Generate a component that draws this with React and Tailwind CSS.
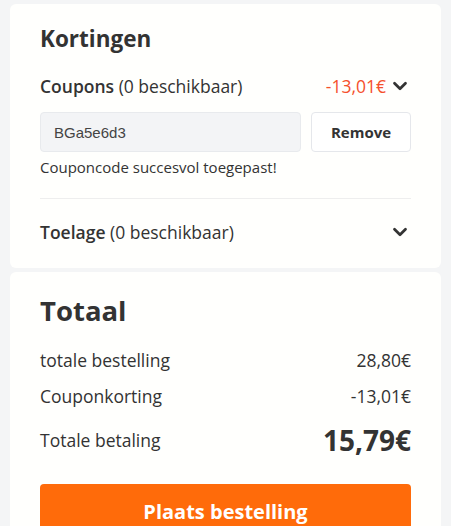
import { ChevronDown } from "lucide-react";

function Row({ label, value }) {
  return (
    <div className="flex items-center justify-between h-[24px]">
      <span className="text-[17.5px] text-[#333]">{label}</span>
      <span className="text-[17.5px] text-[#333]">{value}</span>
    </div>
  );
}

export default function App() {
  return (
    <div className="min-h-screen bg-[#f4f5f6] px-[10px] pt-[4px] flex flex-col gap-[4px] font-['Open_Sans',sans-serif] text-[#333]">
      {/* Kortingen */}
      <div className="bg-[#fffffd] rounded-md px-[30px] pt-[19px] pb-[22px]">
        <h2 className="text-[22.5px] font-bold leading-[32px]">Kortingen</h2>

        <div className="mt-[17px] flex items-center justify-between h-[28px]">
          <div className="text-[17.5px]">
            <span className="font-semibold">Coupons</span> (0 beschikbaar)
          </div>
          <div className="flex items-center gap-[3px]">
            <span className="text-[17.5px] text-[#f5502c]">-13,01€</span>
            <ChevronDown size={22} strokeWidth={3} className="text-[#333]" />
          </div>
        </div>

        <div className="mt-[12px] flex gap-[10px]">
          <input
            readOnly
            value="BGa5e6d3"
            className="flex-1 min-w-0 h-[40px] bg-[#f3f4f6] border border-[#e8eaed] rounded-[4px] px-[13px] font-['Liberation_Sans',sans-serif] text-[15px] text-[#444] outline-none"
          />
          <button className="w-[100px] h-[40px] bg-white border border-[#e5e7eb] rounded-[4px] text-[15px] font-bold text-[#333]">
            Remove
          </button>
        </div>
        <p className="mt-[5px] text-[15px] leading-[20px] text-[#333]">Couponcode succesvol toegepast!</p>

        <div className="mt-[21px] border-t border-[#eeeeee]" />

        <div className="mt-[19px] flex items-center justify-between h-[28px]">
          <div className="text-[17.5px]">
            <span className="font-semibold">Toelage</span> (0 beschikbaar)
          </div>
          <ChevronDown size={22} strokeWidth={3} className="text-[#333]" />
        </div>
      </div>

      {/* Totaal */}
      <div className="bg-[#fffffd] rounded-md px-[30px] pt-[19px] pb-[20px] flex-1">
        <h2 className="text-[27.5px] font-bold leading-[40px]">Totaal</h2>
        <div className="mt-[17px] flex flex-col gap-[12px]">
          <Row label="totale bestelling" value="28,80€" />
          <Row label="Couponkorting" value="-13,01€" />
        </div>
        <div className="mt-[13px] flex items-center justify-between h-[38px]">
          <span className="text-[17.5px]">Totale betaling</span>
          <span className="text-[28px] font-bold">15,79€</span>
        </div>
        <button className="mt-[25px] w-full h-[56px] bg-[#ff6b0a] rounded-[4px] text-white text-[20px] font-bold">
          Plaats bestelling
        </button>
      </div>
    </div>
  );
}
